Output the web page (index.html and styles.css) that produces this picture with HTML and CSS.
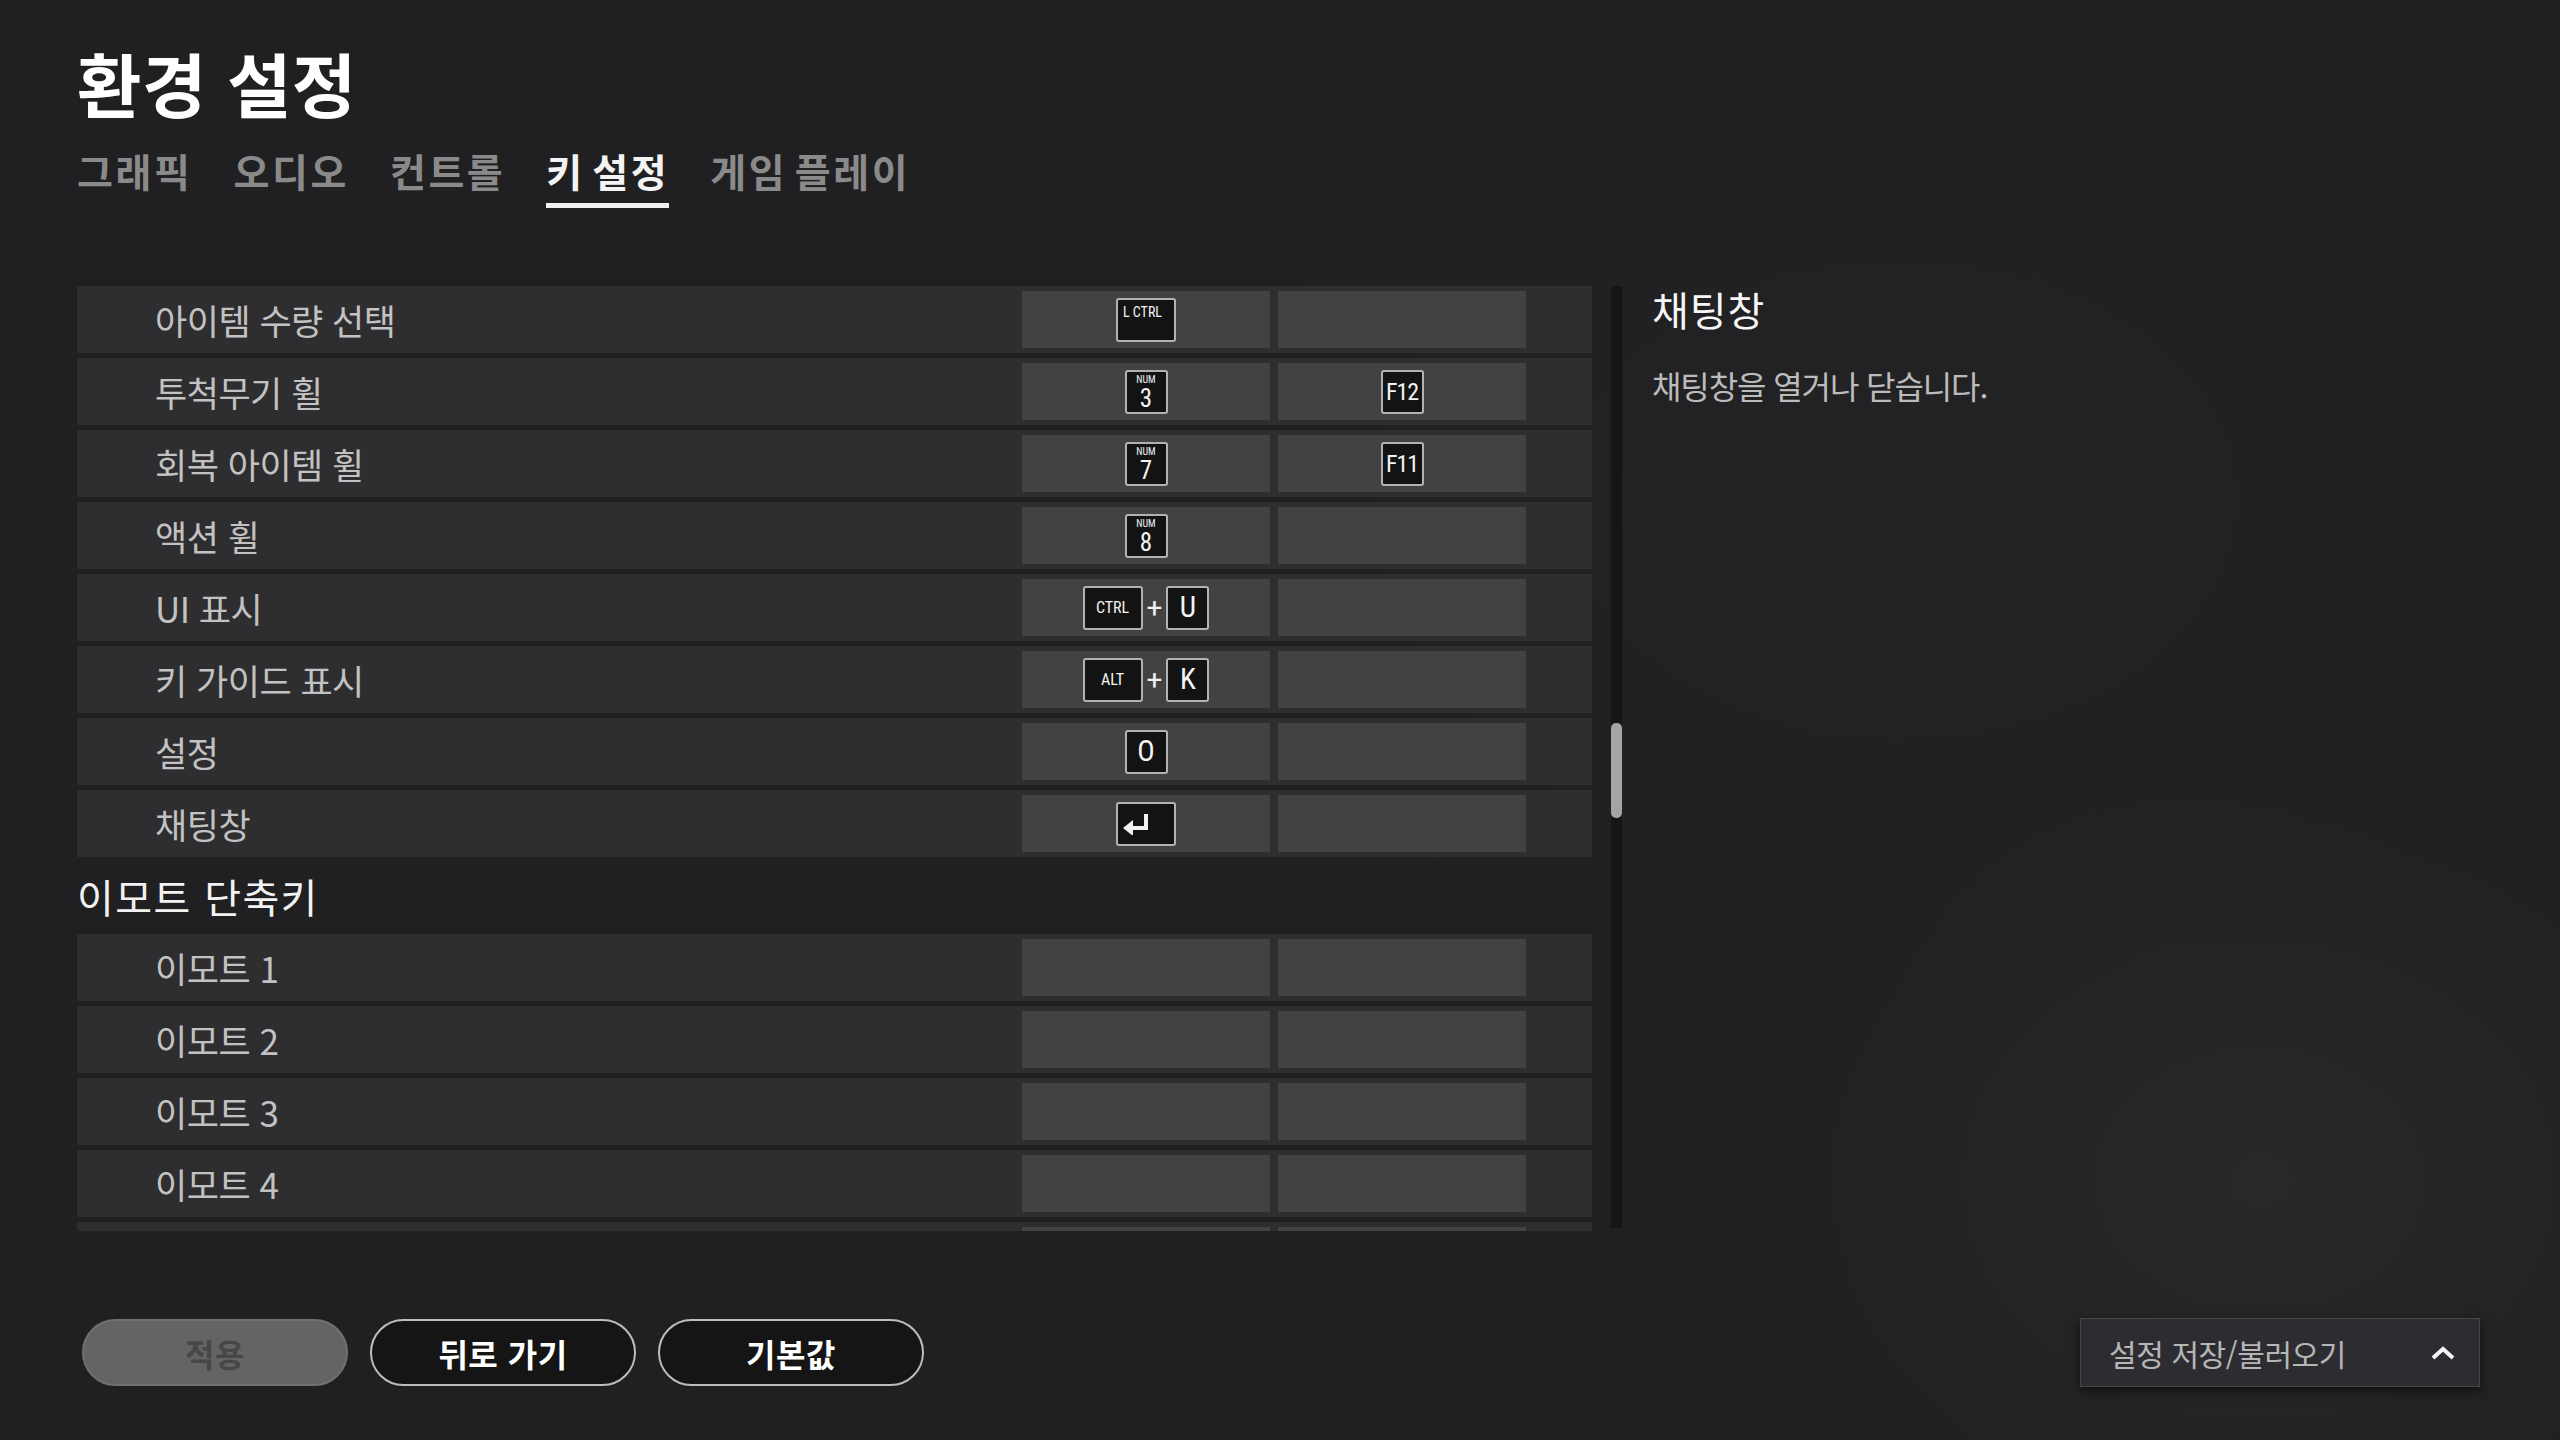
FILE: index.html
```html
<!DOCTYPE html>
<html lang="ko">
<head>
<meta charset="UTF-8">
<title>환경 설정</title>
<link rel="stylesheet" href="styles.css">
</head>
<body>

<div id="settings">
	<header class="top">
		<h1 class="title">환경 설정</h1>
		<nav class="tabs">
			<span class="tab">그래픽</span>
			<span class="tab">오디오</span>
			<span class="tab">컨트롤</span>
			<span class="tab active">키 설정</span>
			<span class="tab">게임 플레이</span>
		</nav>
	</header>

	<main class="body">
		<div class="list">
			<div class="row">
				<span class="label">아이템 수량 선택</span>
				<span class="slot"><span class="key wide corner">L CTRL</span></span>
				<span class="slot"></span>
			</div>
			<div class="row">
				<span class="label">투척무기 휠</span>
				<span class="slot"><span class="key num"><small>NUM</small>3</span></span>
				<span class="slot"><span class="key fn">F12</span></span>
			</div>
			<div class="row">
				<span class="label">회복 아이템 휠</span>
				<span class="slot"><span class="key num"><small>NUM</small>7</span></span>
				<span class="slot"><span class="key fn">F11</span></span>
			</div>
			<div class="row">
				<span class="label">액션 휠</span>
				<span class="slot"><span class="key num"><small>NUM</small>8</span></span>
				<span class="slot"></span>
			</div>
			<div class="row">
				<span class="label">UI 표시</span>
				<span class="slot"><span class="key wide mod">CTRL</span><span class="plus">+</span><span class="key big">U</span></span>
				<span class="slot"></span>
			</div>
			<div class="row">
				<span class="label">키 가이드 표시</span>
				<span class="slot"><span class="key wide mod">ALT</span><span class="plus">+</span><span class="key big">K</span></span>
				<span class="slot"></span>
			</div>
			<div class="row">
				<span class="label">설정</span>
				<span class="slot"><span class="key big">O</span></span>
				<span class="slot"></span>
			</div>
			<div class="row">
				<span class="label">채팅창</span>
				<span class="slot">
					<span class="key wide enter">
						<svg width="28" height="22" viewBox="0 0 28 22"><path d="M24 1 V15 H9" fill="none" stroke="#f2f2f2" stroke-width="4"/><path d="M1 15 L11 7 L11 23 Z" fill="#f2f2f2"/></svg>
					</span>
				</span>
				<span class="slot"></span>
			</div>

			<h2 class="group">이모트 단축키</h2>

			<div class="row">
				<span class="label">이모트 1</span>
				<span class="slot"></span>
				<span class="slot"></span>
			</div>
			<div class="row">
				<span class="label">이모트 2</span>
				<span class="slot"></span>
				<span class="slot"></span>
			</div>
			<div class="row">
				<span class="label">이모트 3</span>
				<span class="slot"></span>
				<span class="slot"></span>
			</div>
			<div class="row">
				<span class="label">이모트 4</span>
				<span class="slot"></span>
				<span class="slot"></span>
			</div>
			<!-- next row peeks in under the fold -->
			<div class="row">
				<span class="label"></span>
				<span class="slot"></span>
				<span class="slot"></span>
			</div>
		</div>

		<div class="scroll"><span class="thumb"></span></div>

		<aside class="detail">
			<h3 class="detail-title">채팅창</h3>
			<p class="detail-text">채팅창을 열거나 닫습니다.</p>
		</aside>
	</main>

	<footer class="bottom">
		<div class="buttons">
			<button class="btn disabled">적용</button>
			<button class="btn">뒤로 가기</button>
			<button class="btn">기본값</button>
		</div>
		<div class="preset">
			<span>설정 저장/불러오기</span>
			<svg width="24" height="14" viewBox="0 0 24 14"><path d="M2 12 L12 3 L22 12" fill="none" stroke="#f4f4f4" stroke-width="4"/></svg>
		</div>
	</footer>
</div>

</body>
</html>
```

FILE: styles.css
```css
* {
	box-sizing: border-box;
	margin: 0;
	padding: 0;
}

html, body {
	height: 100%;
}

body {
	font-family: "Noto Sans CJK KR", "Noto Sans", sans-serif;
	color: #ffffff;
	background-color: #202022;
	background-image:
		radial-gradient(ellipse 520px 420px at 2260px 1180px, rgba(70, 70, 70, .22), transparent),
		radial-gradient(ellipse 700px 500px at 1900px 500px, rgba(55, 55, 55, .12), transparent);
	overflow: hidden;
}

#settings {
	padding: 48px 80px 0 77px;
}

/* header */
.title {
	font-size: 70px;
	font-weight: 700;
	line-height: 70px;
	letter-spacing: 0.5px;
}

.tabs {
	display: flex;
	gap: 41px;
	margin-top: 33px;
}

.tab {
	font-size: 39px;
	font-weight: 700;
	line-height: 39px;
	letter-spacing: 2.6px;
	word-spacing: -6px;
	color: #8a8a8a;
	padding-bottom: 13px;
	border-bottom: 5px solid transparent;
}

.tab.active {
	color: #f4f4f4;
	border-bottom-color: #f0f0f0;
}

/* list */
.body {
	display: flex;
	margin-top: 78px;
}

.list {
	width: 1515px;
	height: 945px;
	overflow: hidden;
}

.row {
	display: flex;
	align-items: center;
	gap: 8px;
	height: 67px;
	margin-bottom: 5px;
	padding: 0 66px 0 78px;
	background: #2e2e30;
}

.label {
	flex: 1;
	font-size: 35px;
	letter-spacing: -0.5px;
	color: #c2c2c2;
}

.slot {
	display: flex;
	align-items: center;
	justify-content: center;
	gap: 4px;
	width: 248px;
	height: 57px;
	background: #424244;
}

.group {
	display: flex;
	align-items: center;
	height: 67px;
	margin-bottom: 5px;
	font-size: 40px;
	font-weight: 400;
	letter-spacing: 1.4px;
	color: #f2f2f2;
}

/* key caps */
.key {
	display: inline-flex;
	flex-direction: column;
	align-items: center;
	justify-content: center;
	width: 43px;
	height: 44px;
	border: 2px solid #b2b2b2;
	border-radius: 3px;
	background: #131313;
	color: #f4f4f4;
	font-family: "Roboto Condensed", "Liberation Sans Narrow", "DejaVu Sans Condensed", Roboto, sans-serif;
	font-stretch: condensed;
	line-height: 1;
}

.key.wide {
	width: 60px;
}

.key.corner {
	align-items: flex-start;
	justify-content: flex-start;
	padding: 5px 0 0 5px;
	font-size: 14px;
}

.key.num {
	font-size: 25px;
	padding-top: 2px;
}

.key.num small {
	font-size: 10px;
	margin-bottom: 1px;
}

.key.fn {
	font-size: 24px;
	letter-spacing: -1px;
}

.key.mod {
	font-size: 16px;
}

.key.big {
	font-size: 29px;
}

.key.enter {
	align-items: flex-start;
	padding-left: 4px;
}

.plus {
	font-family: Roboto, sans-serif;
	font-size: 28px;
	line-height: 1;
	color: #f0f0f0;
}

/* scroll bar */
.scroll {
	position: relative;
	width: 11px;
	height: 942px;
	margin-left: 19px;
	background: #161617;
}

.thumb {
	position: absolute;
	top: 437px;
	left: 0;
	width: 11px;
	height: 95px;
	border-radius: 5px;
	background: #a4a4a4;
}

/* description */
.detail {
	margin-left: 30px;
	padding-top: 3px;
}

.detail-title {
	font-size: 40px;
	font-weight: 400;
	line-height: 40px;
	letter-spacing: 1px;
	color: #f6f6f6;
}

.detail-text {
	margin-top: 40px;
	font-size: 32px;
	line-height: 32px;
	letter-spacing: -1.1px;
	color: #bcbcbc;
}

/* footer */
.bottom {
	display: flex;
	align-items: center;
	justify-content: space-between;
	margin-top: 87px;
	padding-left: 5px;
	height: 69px;
}

.buttons {
	display: flex;
	gap: 22px;
}

.btn {
	width: 266px;
	height: 67px;
	border: 2px solid #bdbdbd;
	border-radius: 34px;
	background: #151515;
	color: #ffffff;
	font-family: "Noto Sans CJK KR", sans-serif;
	font-size: 32px;
	font-weight: 700;
	letter-spacing: 0.5px;
}

.btn.disabled {
	background: #646464;
	border-color: #707070;
	color: #474747;
}

.preset {
	display: flex;
	align-items: center;
	justify-content: space-between;
	width: 400px;
	height: 69px;
	padding: 0 24px 0 28px;
	background: #2d2d31;
	border: 1px solid #47474b;
	box-shadow: 0 4px 10px rgba(0, 0, 0, .55);
	font-size: 30px;
	letter-spacing: -0.4px;
	color: #b6b6b6;
}
```
